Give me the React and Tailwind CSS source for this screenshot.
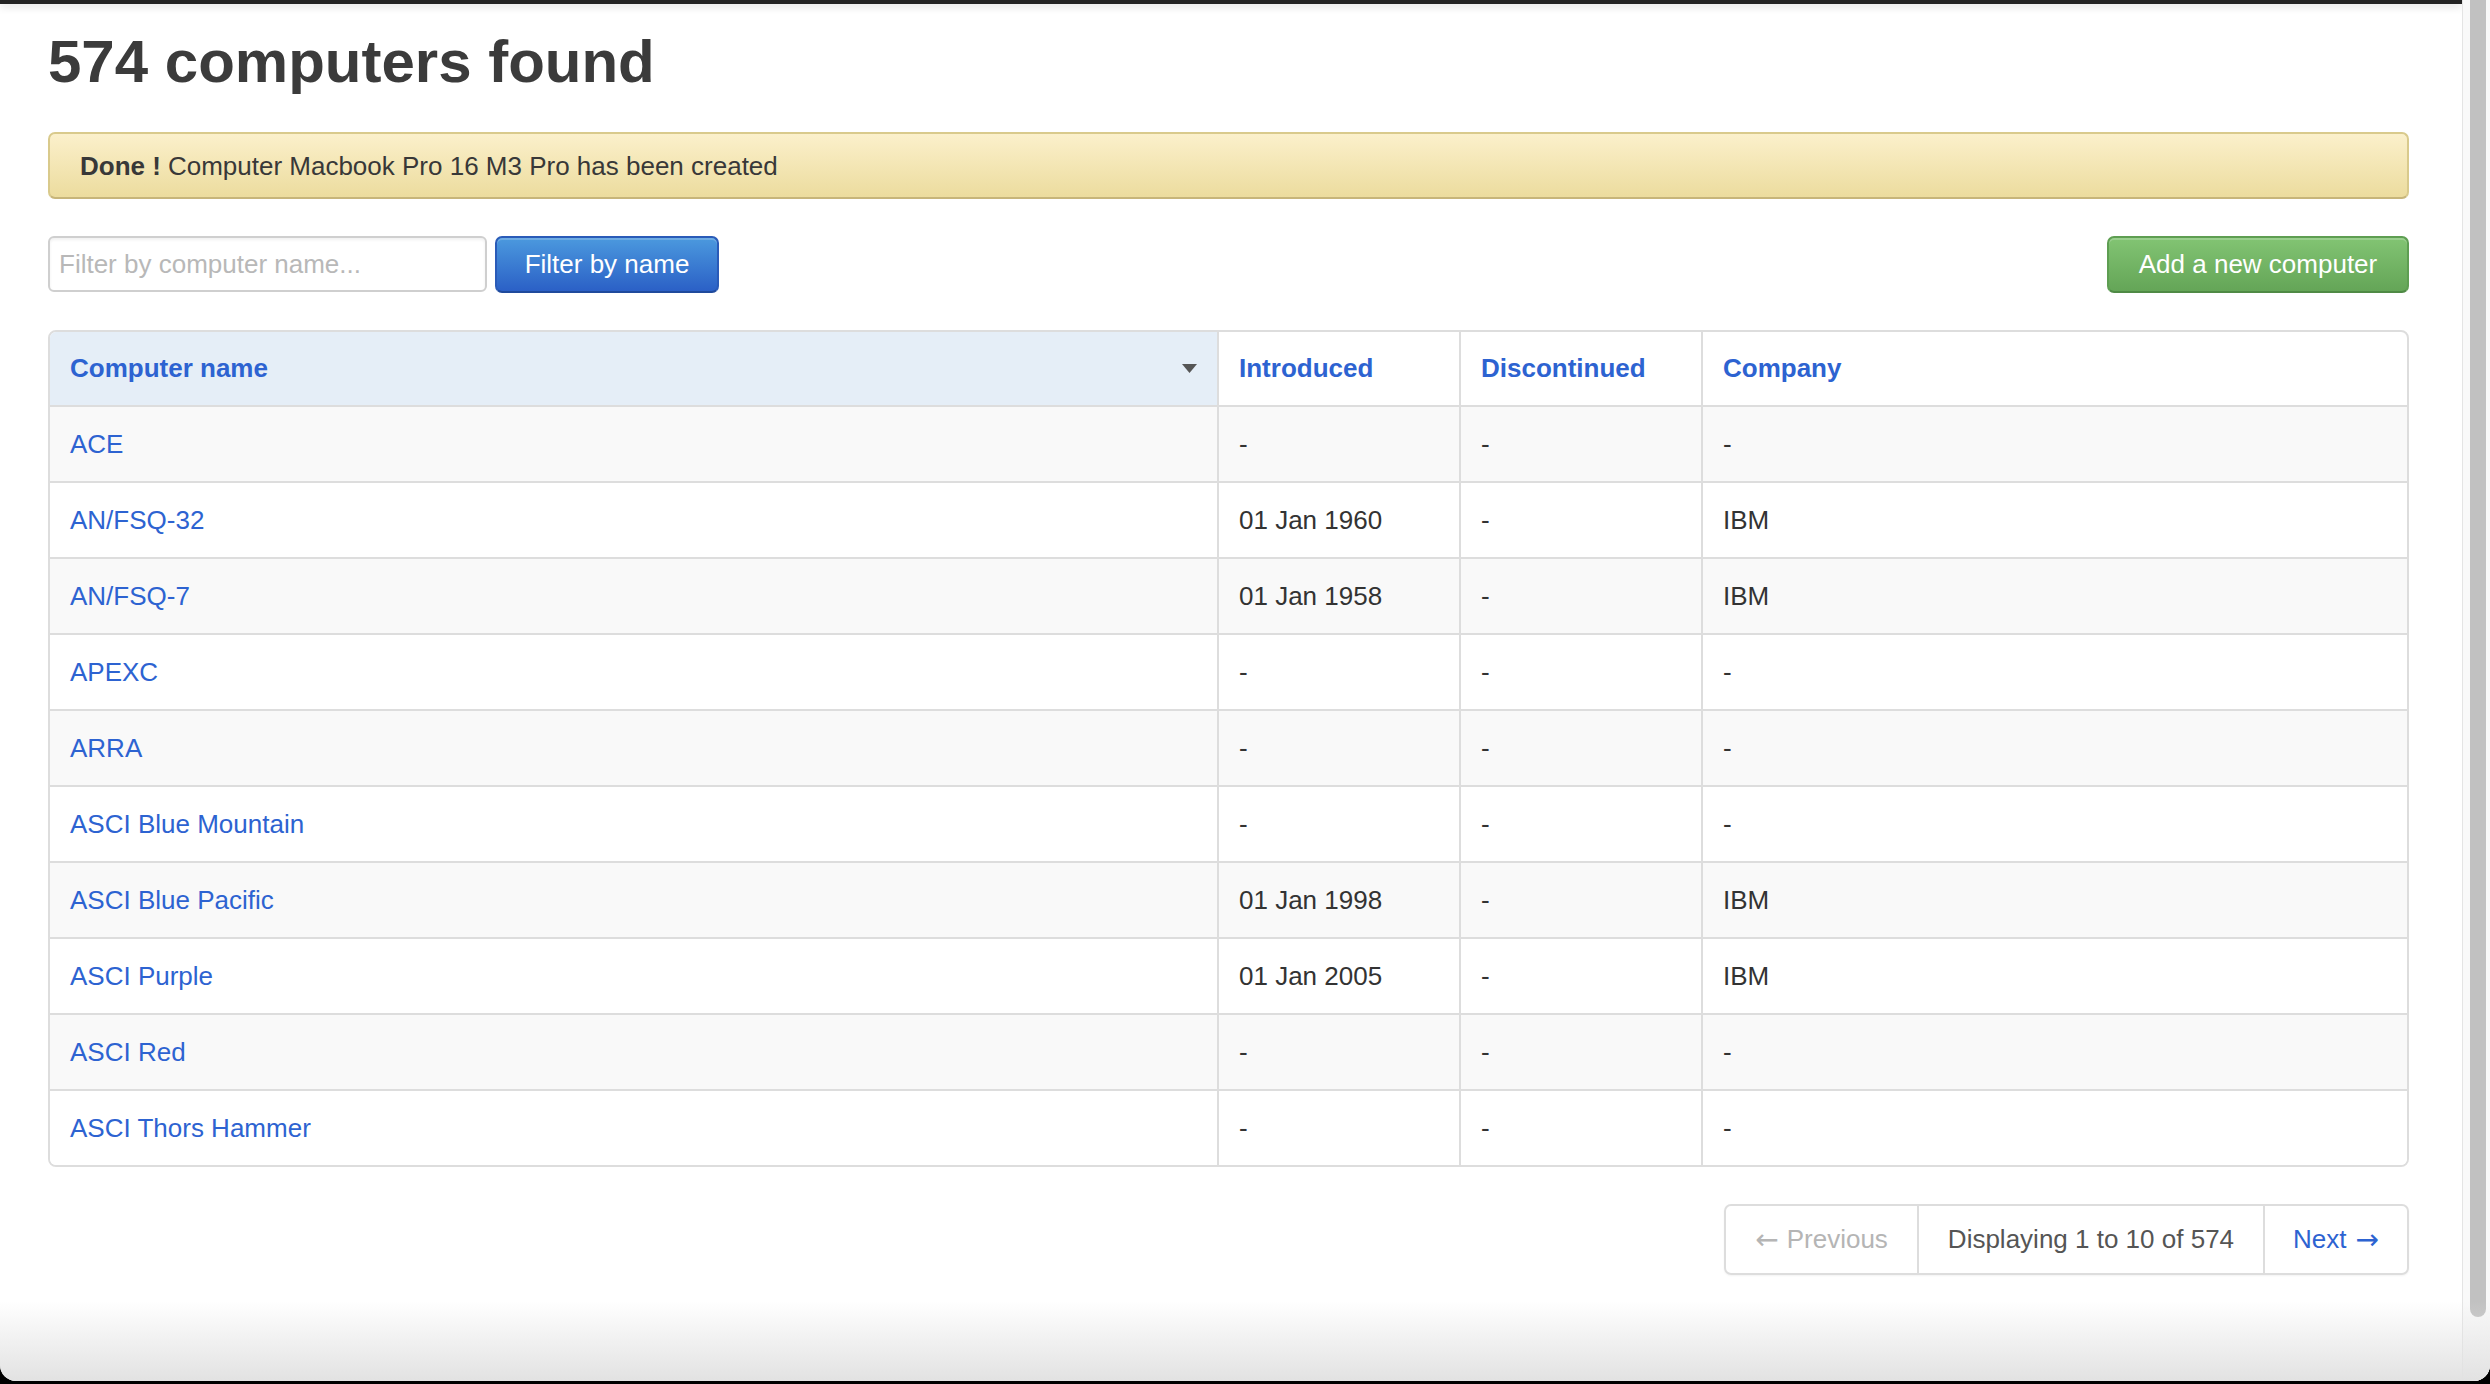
const computers = [
  { name: 'ACE', introduced: '-', discontinued: '-', company: '-' },
  { name: 'AN/FSQ-32', introduced: '01 Jan 1960', discontinued: '-', company: 'IBM' },
  { name: 'AN/FSQ-7', introduced: '01 Jan 1958', discontinued: '-', company: 'IBM' },
  { name: 'APEXC', introduced: '-', discontinued: '-', company: '-' },
  { name: 'ARRA', introduced: '-', discontinued: '-', company: '-' },
  { name: 'ASCI Blue Mountain', introduced: '-', discontinued: '-', company: '-' },
  { name: 'ASCI Blue Pacific', introduced: '01 Jan 1998', discontinued: '-', company: 'IBM' },
  { name: 'ASCI Purple', introduced: '01 Jan 2005', discontinued: '-', company: 'IBM' },
  { name: 'ASCI Red', introduced: '-', discontinued: '-', company: '-' },
  { name: 'ASCI Thors Hammer', introduced: '-', discontinued: '-', company: '-' },
]

const App = () => {
  return (
    <div className="w-[2490px] h-[1384px] bg-black overflow-hidden font-['Liberation_Sans',Arial,sans-serif] text-[26px]">
      <div className="relative flex h-[1381px] bg-white rounded-b-[16px] overflow-hidden">
        {/* Page */}
        <div className="w-[2462px] flex flex-col">
          <div className="h-[4px] bg-[#232323] shadow-[0_2px_8px_rgba(0,0,0,0.18)]" />

          <div className="pl-[48px] pr-[53px]">
            <h1 className="mt-[28px] text-[60px] leading-[60px] font-bold text-[#3b3b3b]">
              574 computers found
            </h1>

            {/* Alert */}
            <div className="mt-[40px] h-[67px] flex items-center pt-[2px] px-[30px] rounded-[7px] border-2 border-[#d9ca8c] border-b-[#c7b57a] bg-[linear-gradient(to_bottom,#fbf0cb,#ecdc9e)] text-[#383838]">
              <span className="font-bold">Done !</span>
              <span className="ml-[7px]">Computer Macbook Pro 16 M3 Pro has been created</span>
            </div>

            {/* Filter row */}
            <div className="mt-[37px] flex items-start justify-between">
              <div className="flex items-start gap-[8px]">
                <input
                  type="text"
                  placeholder="Filter by computer name..."
                  className="w-[439px] h-[56px] px-[9px] rounded-[6px] border-2 border-[#cfcfcf] bg-white shadow-[inset_0_2px_3px_rgba(0,0,0,0.06)] text-[26px] text-[#555] placeholder:text-[#b8b8b8] outline-none"
                />
                <button className="w-[224px] h-[57px] rounded-[7px] border-2 border-[#2a5bb8] border-b-[#1f4a9c] bg-[linear-gradient(to_bottom,#4b99de,#2b60c6)] text-white text-[26px] shadow-[inset_0_2px_0_rgba(255,255,255,0.2)]">
                  Filter by name
                </button>
              </div>
              <button className="w-[302px] h-[57px] rounded-[7px] border-2 border-[#5e9e52] border-b-[#4f8a45] bg-[linear-gradient(to_bottom,#82c473,#64a557)] text-white text-[26px] shadow-[inset_0_2px_0_rgba(255,255,255,0.2)]">
                Add a new computer
              </button>
            </div>

            {/* Table */}
            <div className="mt-[37px] border-2 border-[#dddddd] rounded-[8px] overflow-hidden">
              <div className="grid grid-cols-[1167px_242px_242px_1fr] h-[73px] font-bold text-[#2d63d1]">
                <div className="flex items-center justify-between px-[20px] bg-[#e5eef7]">
                  <span>Computer name</span>
                  <svg width="15" height="9" viewBox="0 0 15 9">
                    <path d="M0 0 H15 L7.5 9 Z" fill="#555" />
                  </svg>
                </div>
                <div className="flex items-center px-[20px] border-l-2 border-[#dddddd]">Introduced</div>
                <div className="flex items-center px-[20px] border-l-2 border-[#dddddd]">Discontinued</div>
                <div className="flex items-center px-[20px] border-l-2 border-[#dddddd]">Company</div>
              </div>
              {computers.map((c, i) => (
                <div
                  key={c.name}
                  className={
                    i % 2 === 0
                      ? 'grid grid-cols-[1167px_242px_242px_1fr] h-[76px] border-t-2 border-[#dddddd] bg-[#f9f9f9] text-[#333]'
                      : 'grid grid-cols-[1167px_242px_242px_1fr] h-[76px] border-t-2 border-[#dddddd] bg-white text-[#333]'
                  }
                >
                  <div className="flex items-center px-[20px] text-[#2d63d1]">{c.name}</div>
                  <div className="flex items-center px-[20px] border-l-2 border-[#dddddd]">{c.introduced}</div>
                  <div className="flex items-center px-[20px] border-l-2 border-[#dddddd]">{c.discontinued}</div>
                  <div className="flex items-center px-[20px] border-l-2 border-[#dddddd]">{c.company}</div>
                </div>
              ))}
            </div>

            {/* Pagination */}
            <div className="mt-[37px] flex justify-end">
              <div className="flex h-[71px] rounded-[7px] border-2 border-[#dddddd] shadow-[0_1px_2px_rgba(0,0,0,0.05)]">
                <div className="flex items-center px-[29px] text-[#b5b5b5]">
                  <span className="font-['DejaVu_Sans',sans-serif] text-[28px] mr-[8px]">←</span>Previous
                </div>
                <div className="flex items-center px-[29px] border-l-2 border-[#dddddd] text-[#555]">Displaying 1 to 10 of 574</div>
                <div className="flex items-center px-[28px] border-l-2 border-[#dddddd] text-[#2d63d1]">
                  Next<span className="font-['DejaVu_Sans',sans-serif] text-[28px] ml-[9px]">→</span>
                </div>
              </div>
            </div>
          </div>
        </div>

        {/* Scrollbar */}
        <div className="w-[1px] bg-[#e4e4e4]" />
        <div className="flex-1 bg-[#f9f9f9] pl-[7px]">
          <div className="w-[16px] h-[1317px] bg-[#c1c1c1] rounded-b-[8px]" />
        </div>

        {/* bottom window shade */}
        <div className="absolute left-0 right-0 bottom-0 h-[80px] pointer-events-none bg-[linear-gradient(to_bottom,rgba(230,230,230,0),rgba(226,226,226,1))]" />
      </div>
    </div>
  )
}

export default App
